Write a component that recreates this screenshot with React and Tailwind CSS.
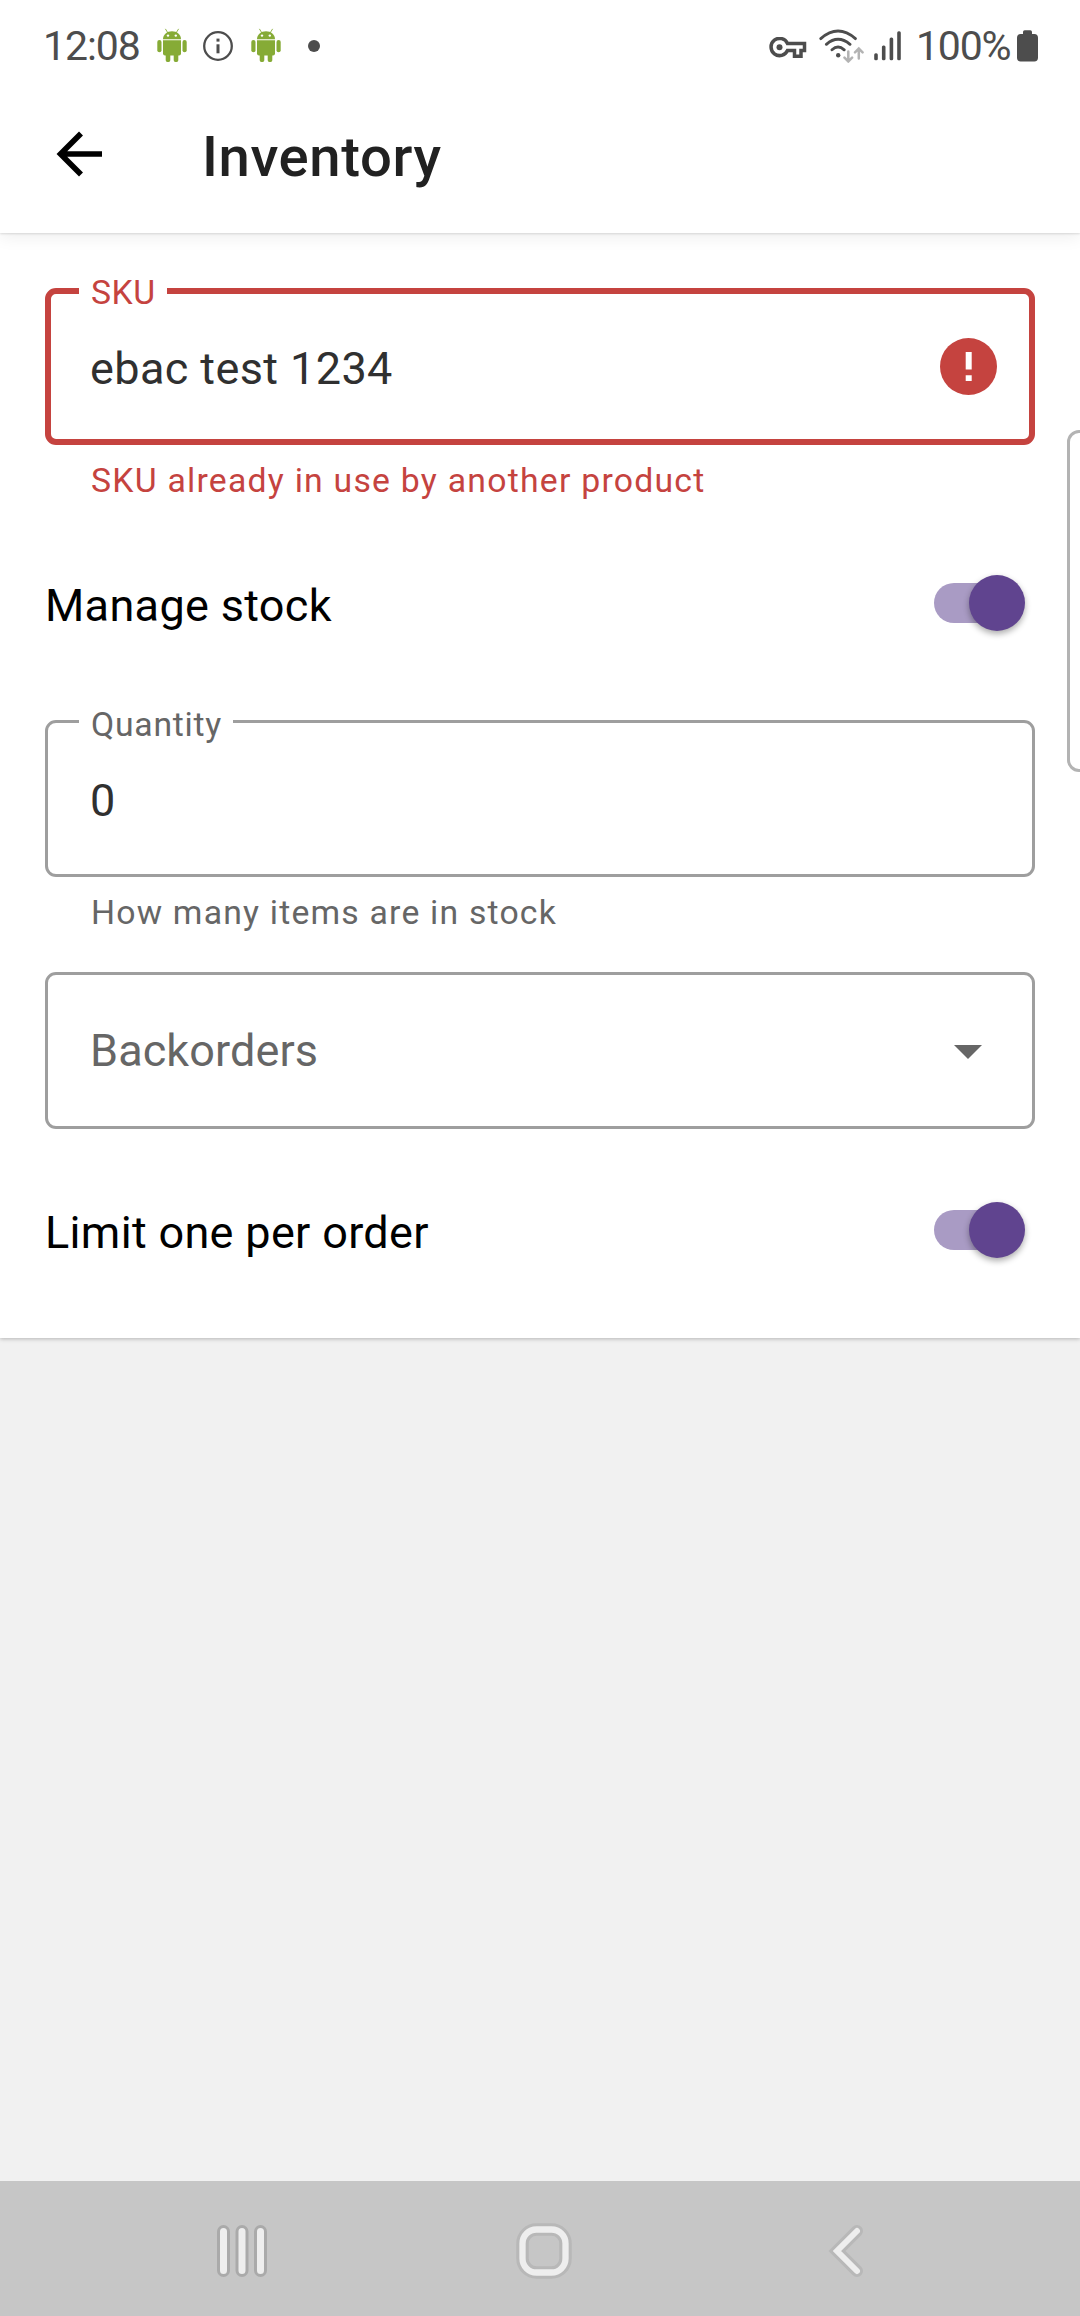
import React from "react";

function Android() {
  return (
    <svg width="30" height="36" viewBox="0 0 30 36" fill="#86ab36">
      <path d="M6 11.2C6 6.5 10 3.2 15 3.2s9 3.300 9 8z" />
      <path d="M8.600 1.200l2.200 3.600M21.400 1.200l-2.200 3.600" stroke="#86ab36" strokeWidth="0.900" strokeLinecap="round" />
      <circle cx="11" cy="7.600" r="1.200" fill="#fff" />
      <circle cx="18.800" cy="7.600" r="1.200" fill="#fff" />
      <path d="M6 12.300h18v13.200a2 2 0 0 1-2 2H8a2 2 0 0 1-2-2z" />
      <rect x="0.300" y="12" width="4.200" height="12.300" rx="2.100" />
      <rect x="25.500" y="12" width="4.200" height="12.300" rx="2.100" />
      <path d="M8.700 26h4.600v6.300q0 1.700-1.700 1.700h-1.200q-1.700 0-1.700-1.700zM16.700 26h4.600v6.300q0 1.700-1.700 1.700h-1.200q-1.700 0-1.700-1.700z" />
    </svg>
  );
}

function Info() {
  return (
    <svg width="30" height="30" viewBox="0 0 30 30" fill="#4d4d4d">
      <circle cx="15" cy="15" r="13.800" fill="none" stroke="#4d4d4d" strokeWidth="2.300" />
      <rect x="13.500" y="7.600" width="3" height="3" />
      <rect x="13.500" y="13.300" width="3" height="9" />
    </svg>
  );
}

function Key() {
  return (
    <svg width="38" height="22" viewBox="0 0 38 22" fill="none" stroke="#4d4d4d">
      <path d="M18.500 6.500H35.500v7h-3.500v5.800h-6.500V13.500H18.500A8.600 8.600 0 1 1 18.500 6.500z" strokeWidth="3.500" />
      <circle cx="10.500" cy="10.300" r="3" fill="#4d4d4d" stroke="none" />
    </svg>
  );
}

function Wifi() {
  return (
    <svg width="46" height="34" viewBox="0 0 46 34" fill="none" stroke="#4d4d4d" strokeWidth="2.900" strokeLinecap="round">
      <path d="M1.800 9.600Q19 -5.500 36.400 9.600M7.400 15.300Q19 5.200 31 15.300M13 20.800Q19 15.300 25.200 20.800" />
      <circle cx="19.200" cy="26.300" r="2.200" fill="#4d4d4d" stroke="none" />
      <path d="M29.300 22.500v10M25.500 28.700l3.800 3.800 3.800-3.800M39.800 29.500v-10M36 23.300l3.800-3.800 3.800 3.800" stroke="#b3b3b3" strokeWidth="2.500" />
    </svg>
  );
}

function Signal() {
  return (
    <svg width="28" height="30" viewBox="0 0 28 30" fill="#4d4d4d">
      <rect x="0.200" y="22.300" width="3.600" height="7" rx="1.500" />
      <rect x="7.900" y="14.600" width="3.600" height="14.700" rx="1.500" />
      <rect x="15.600" y="6.600" width="3.600" height="22.700" rx="1.500" />
      <rect x="23.200" y="0.300" width="3.600" height="29" rx="1.500" />
    </svg>
  );
}

function Battery() {
  return (
    <svg width="21" height="32" viewBox="0 0 21 32" fill="#4d4d4d">
      <path d="M6 4V2q0-1.700 1.700-1.700h5.600q1.700 0 1.700 1.700v2h2.300Q21 4 21 7.800v20Q21 31.500 17.300 31.500H3.700Q0 31.500 0 27.800v-20Q0 4 3.700 4z" />
    </svg>
  );
}

function Switch() {
  return (
    <div className="relative mr-[10px] flex h-[57px] w-[91px] items-center">
      <div className="h-10 w-[84px] rounded-full bg-[#a99bc4]" />
      <div className="absolute right-0 top-[0.5px] size-[56.25px] rounded-full bg-[#60448f] shadow-[0_3px_6px_rgba(0,0,0,0.33)]" />
    </div>
  );
}

function SwitchRow({ label }) {
  return (
    <div className="flex h-[57px] items-center justify-between">
      <span className="pt-[5px] text-[45px] leading-[53px] tracking-[0.33px] text-black">{label}</span>
      <Switch />
    </div>
  );
}

export default function App() {
  return (
    <div className="relative flex h-[2316px] w-[1080px] flex-col overflow-hidden bg-[#f1f1f1] font-[Roboto,sans-serif]">
      <header className="relative z-10 h-[233px] bg-white shadow-[0_1px_2px_rgba(0,0,0,0.12),0_4px_16px_rgba(0,0,0,0.07)]">
        <div className="flex h-[92px] items-center justify-between pl-[43px] pr-[42px] text-[41px] text-[#4d4d4d]">
          <div className="flex items-center">
            <span className="w-[114px] leading-[48px] tracking-[-1.1px]">12:08</span>
            <Android />
            <span className="ml-4 mr-[18px]"><Info /></span>
            <Android />
            <span className="ml-[27px] size-3 rounded-full bg-[#4d4d4d]" />
          </div>
          <div className="flex items-center">
            <span className="pt-[3px]"><Key /></span>
            <span className="ml-[12px]"><Wifi /></span>
            <span className="ml-[9px]"><Signal /></span>
            <span className="ml-[14px] w-[101px] leading-[48px] tracking-[-1.2px]">100%</span>
            <Battery />
          </div>
        </div>
        <div className="flex h-[124px] items-center pl-[56px]">
          <svg width="46" height="46" viewBox="0 0 46 46" fill="none" stroke="#000" strokeWidth="5.600">
            <path d="M46 23H5M25 2.500L4.500 23 25 43.500" />
          </svg>
          <h1 className="ml-[100px] pt-[6px] text-[56.25px] font-medium leading-[66px] tracking-[0.6px] text-[#212121]">Inventory</h1>
        </div>
      </header>

      <main className="flex h-[1105px] shrink-0 flex-col bg-white px-[45px] pt-[55px] shadow-[0_1px_4px_rgba(0,0,0,0.25)]">
        <div className="relative flex h-[157px] items-center justify-between rounded-[11px] border-[6px] border-[#c5433f] pl-[39px] pr-[32px]">
          <span className="absolute left-[28px] top-[-21px] w-[88px] bg-white pl-3 text-[33.75px] leading-10 tracking-[0.5px] text-[#c5433f]">SKU</span>
          <span className="pt-[4px] text-[45px] leading-[53px] tracking-[0.4px] text-[#303030]">ebac test 1234</span>
          <svg width="57" height="57" viewBox="0 0 57 57">
            <circle cx="28.500" cy="28.500" r="28.500" fill="#c5433f" />
            <path d="M25.700 14h6v17.500h-6zM25.700 37.300h6v5.700h-6z" fill="#fff" />
          </svg>
        </div>
        <p className="mt-4 pl-[46px] text-[33.75px] leading-10 tracking-[1.24px] text-[#c5433f]">SKU already in use by another product</p>

        <div className="mt-[73px]"><SwitchRow label="Manage stock" /></div>

        <div className="relative mt-[89px] flex h-[157px] items-center rounded-[11px] border-[3px] border-[#9e9e9e] pl-[42px]">
          <span className="absolute left-[31px] top-[-18px] w-[154px] bg-white pl-3 text-[33.75px] leading-10 tracking-[0.75px] text-[#666]">Quantity</span>
          <span className="pt-[4px] text-[45px] leading-[53px] tracking-[0.4px] text-[#303030]">0</span>
        </div>
        <p className="mt-4 pl-[46px] text-[33.75px] leading-10 tracking-[1.2px] text-[#666]">How many items are in stock</p>

        <div className="mt-[39px] flex h-[157px] items-center justify-between rounded-[11px] border-[3px] border-[#9e9e9e] pl-[42px] pr-[50px]">
          <span className="text-[45px] leading-[53px] tracking-[0.1px] text-[#666]">Backorders</span>
          <svg className="mt-[3px]" width="28" height="14" viewBox="0 0 28 14"><path d="M0 0h28L14 14z" fill="#666" /></svg>
        </div>

        <div className="mt-[72px]"><SwitchRow label="Limit one per order" /></div>
      </main>

      <nav className="mt-auto flex h-[135px] items-center bg-[#c6c6c6] pt-[5px]">
        <svg className="ml-[217px]" width="50" height="52" viewBox="0 0 50 52" fill="#eee" stroke="#aaa" strokeWidth="3">
          <rect x="1.500" y="1.500" width="10" height="49" rx="5" />
          <rect x="20" y="1.500" width="10" height="49" rx="5" />
          <rect x="38.500" y="1.500" width="10" height="49" rx="5" />
        </svg>
        <svg className="ml-[249px]" width="56" height="56" viewBox="0 0 56 56" fill="none">
          <rect x="6.500" y="6.500" width="43" height="43" rx="14" stroke="#b8b8b8" strokeWidth="12.500" />
          <rect x="6.500" y="6.500" width="43" height="43" rx="14" stroke="#eee" strokeWidth="6.300" />
        </svg>
        <svg className="ml-[256px]" width="36" height="52" viewBox="0 0 36 52" fill="none" strokeLinecap="round">
          <path d="M29 6L9 26l20 20" stroke="#b8b8b8" strokeWidth="12" />
          <path d="M29 6L9 26l20 20" stroke="#eee" strokeWidth="6" />
        </svg>
      </nav>

      <div className="absolute right-[-21px] top-[430px] z-20 h-[342px] w-[34px] rounded-[12px] border-[3px] border-[#b3b3b3] bg-white" />
    </div>
  );
}
